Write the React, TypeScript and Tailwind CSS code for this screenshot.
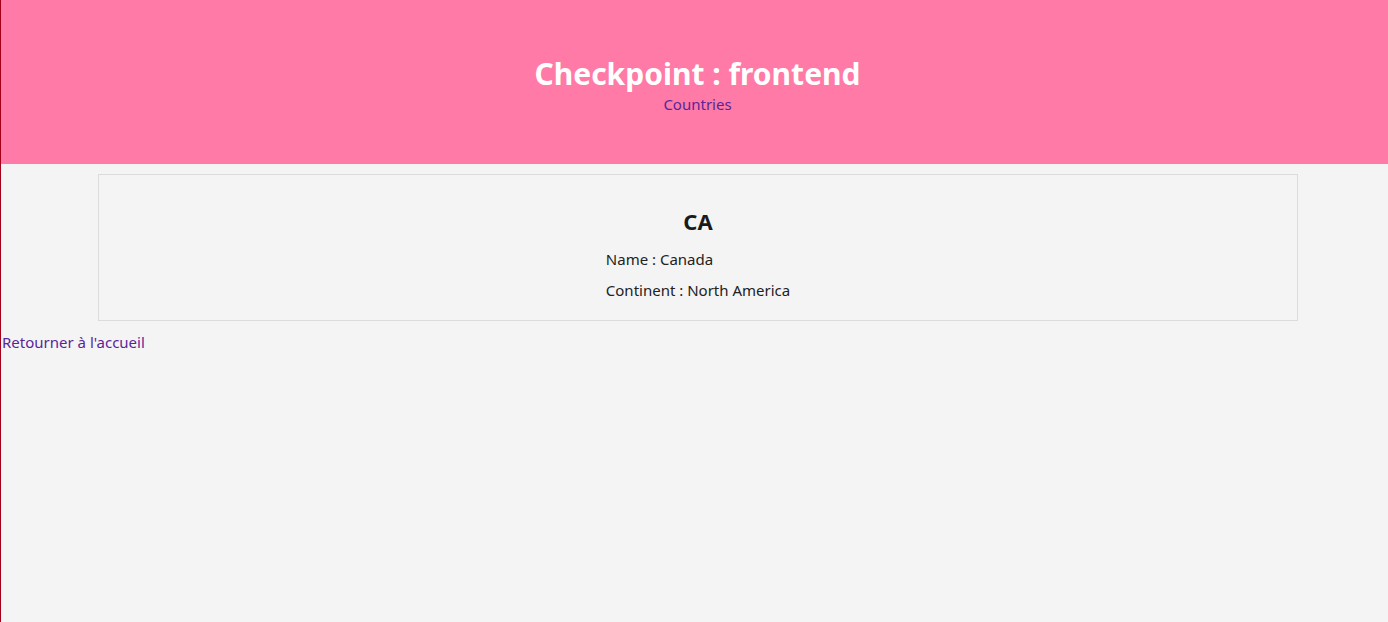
export default function App() {
    return (
        <div className="min-h-[622px] bg-[#f4f4f4] border-l border-[#a3001e] text-[#222] font-['Segoe_UI','Noto_Sans',sans-serif]">
            <header className="h-[164px] bg-[#ff7aa6] flex flex-col items-center justify-center pt-[3px] pl-[6px]">
                <h1 className="text-[30px] leading-[40px] font-bold text-white">Checkpoint : frontend</h1>
                <a href="#" className="text-[15px] leading-[20px] text-[#5a2598]">Countries</a>
            </header>

            <section className="w-[1200px] ml-[97px] mt-[10px] border border-[#dcdcdc] h-[147px] flex flex-col items-center pt-[31px]">
                <h3 className="text-[22px] leading-[30px] font-bold text-[#1a1a1a]">CA</h3>
                <ul className="mt-[13px] flex flex-col gap-[11px] text-[15px] leading-[20px] text-left">
                    <li>Name : Canada</li>
                    <li>Continent : North America</li>
                </ul>
            </section>

            <a href="#" className="block mt-[11px] ml-[1px] text-[15px] leading-[20px] text-[#5a2598]">Retourner à l'accueil</a>
        </div>
    )
}
